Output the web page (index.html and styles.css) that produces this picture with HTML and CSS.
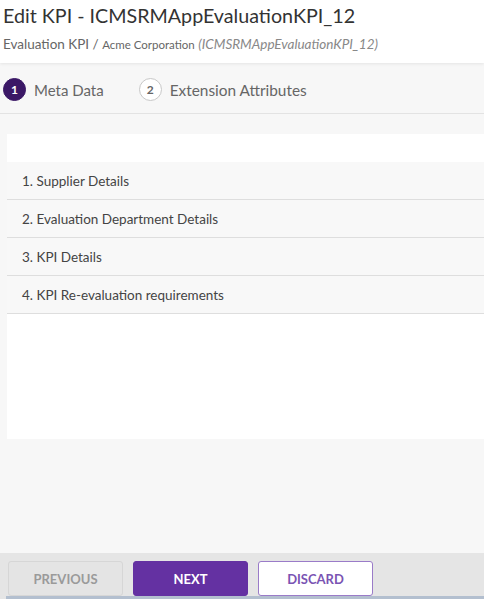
FILE: index.html
```html
<!DOCTYPE html>
<html lang="en">
<head>
<meta charset="utf-8">
<title>Edit KPI</title>
<link rel="stylesheet" href="styles.css">
</head>
<body>
<div class="page">
  <header class="header">
    <h1 class="title">Edit KPI - ICMSRMAppEvaluationKPI_12</h1>
    <div class="crumbs"><span class="crumb-main">Evaluation KPI</span> / <span class="crumb-org">Acme Corporation</span> <span class="crumb-id">(ICMSRMAppEvaluationKPI_12)</span></div>
  </header>
  <nav class="steps">
    <div class="step active"><span class="step-num">1</span><span class="step-label">Meta Data</span></div>
    <div class="step"><span class="step-num">2</span><span class="step-label">Extension Attributes</span></div>
  </nav>
  <main class="content">
    <section class="panel">
      <div class="panel-top"></div>
      <ul class="sections">
        <li class="section-row">1. Supplier Details</li>
        <li class="section-row">2. Evaluation Department Details</li>
        <li class="section-row">3. KPI Details</li>
        <li class="section-row">4. KPI Re-evaluation requirements</li>
      </ul>
    </section>
  </main>
  <footer class="footer">
    <div class="buttons">
      <button class="btn btn-prev" type="button">PREVIOUS</button>
      <button class="btn btn-next" type="button">NEXT</button>
      <button class="btn btn-discard" type="button">DISCARD</button>
    </div>
    <div class="footer-line"></div>
  </footer>
</div>
</body>
</html>
```
FILE: styles.css
```css
* { box-sizing: border-box; }
html, body { margin: 0; padding: 0; height: 100%; }
body {
  font-family: "Lato", "Noto Sans", sans-serif;
  background: #f7f7f7;
  color: #333;
}
.page {
  height: 599px;
  display: flex;
  flex-direction: column;
  overflow: hidden;
}
.header {
  background: #fff;
  height: 63px;
  padding: 3px 0 0 3px;
  box-shadow: 0 1px 3px rgba(0,0,0,0.08);
  position: relative;
  z-index: 1;
}
.title {
  margin: 0;
  font-size: 19.7px;
  font-weight: 400;
  color: #333;
  line-height: 26px;
}
.crumbs {
  margin-top: 7px;
  font-size: 13.5px;
  color: #666;
  line-height: 17px;
}
.crumb-org { font-size: 11.5px; color: #666; }
.crumb-id { font-style: italic; color: #888; font-size: 13.5px; }
.steps {
  height: 51px;
  display: flex;
  align-items: center;
  gap: 35px;
  padding: 3px 0 0 3px;
  border-bottom: 1px solid #e3e3e3;
  background: #f7f7f7;
}
.step { display: flex; align-items: center; gap: 8px; }
.step-num {
  width: 23px; height: 23px;
  border-radius: 50%;
  border: 1.5px solid #c8c8c8;
  display: flex; align-items: center; justify-content: center;
  font-size: 12px; font-weight: 700; color: #666;
  background: #fff;
}
.step.active .step-num {
  background: #3b1866;
  border-color: #3b1866;
  color: #fff;
}
.step-label { font-size: 15px; color: #666; }
.step + .step .step-label { font-size: 15.4px; }
.content {
  flex: 1;
  padding: 20px 0 0 7px;
}
.panel {
  background: #fff;
  height: 305px;
}
.panel-top { height: 28px; }
.sections { list-style: none; margin: 0; padding: 0; }
.section-row {
  height: 38px;
  display: flex;
  align-items: center;
  padding: 1px 0 0 15px;
  font-size: 13.5px;
  color: #444;
  background: #f8f8f8;
  border-bottom: 1.5px solid #dedede;
}
.footer {
  background: #e5e5e5;
  height: 46px;
  display: flex;
  flex-direction: column;
}
.buttons {
  display: flex;
  gap: 10px;
  padding: 8px 0 0 8px;
  height: 43px;
}
.btn {
  width: 115px;
  height: 35px;
  border-radius: 3px;
  font-family: "Lato", "Noto Sans", sans-serif;
  font-size: 13px;
  font-weight: 700;
  cursor: pointer;
}
.btn-prev {
  background: #e4e4e4;
  border: 1px solid #d6d6d6;
  color: #9a9a9a;
}
.btn-next {
  background: #6431a2;
  border: 1px solid #6431a2;
  color: #fff;
}
.btn-discard {
  background: #fff;
  border: 1.5px solid #9a7bc8;
  color: #7a54b3;
}
.footer-line {
  height: 3px;
  margin-left: 6px;
  background: #b3bfcf;
}
```
